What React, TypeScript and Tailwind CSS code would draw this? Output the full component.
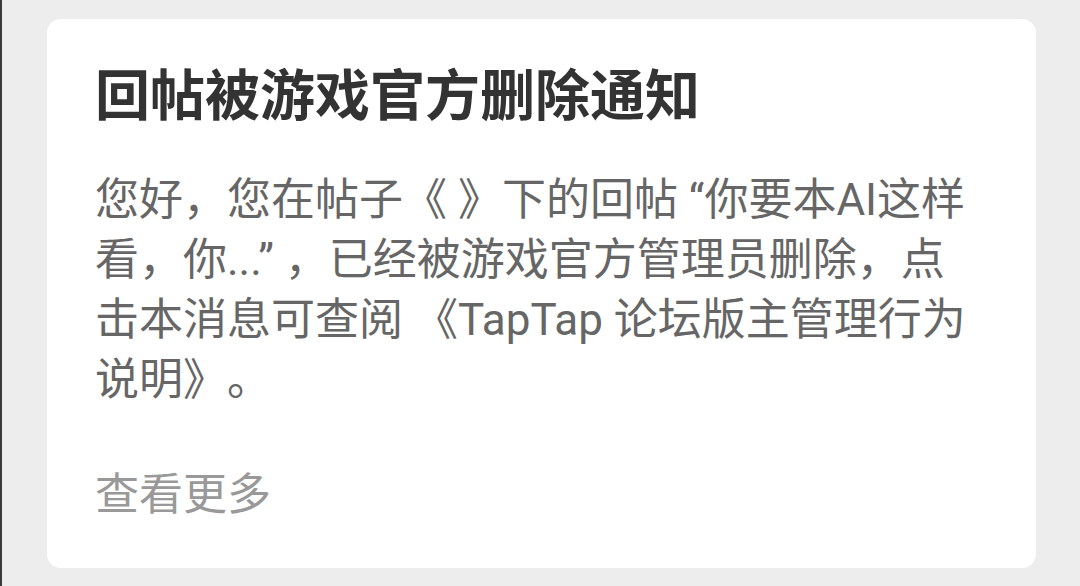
export default function App() {
  return (
    <div
      lang="zh-CN"
      className="h-[586px] w-[1080px] overflow-hidden border-l-2 border-[#3a3a3a] bg-[#ededed] pt-[19px] pl-[45px] pr-[44px] font-['Roboto','Noto_Sans_CJK_SC',sans-serif] [text-spacing-trim:space-all]"
    >
      <div className="h-[549px] rounded-[14px] bg-white pl-[48px] pr-[30px] pt-[41px]">
        {/* Title */}
        <h1 className="text-[55px] font-bold leading-[72px] text-[#333333]">
          回帖被游戏官方删除通知
        </h1>

        {/* Message body */}
        <p className="mt-[38px] whitespace-nowrap text-[44px] leading-[60px] text-[#666666]">
          您好，您在帖子《 》下的回帖 “你要本AI这样
          <br />
          看，你...” ，已经被游戏官方管理员删除，点
          <br />
          击本消息可查阅 《TapTap 论坛版主管理行为
          <br />
          说明》。
        </p>

        <div className="mt-[55px] text-[44px] leading-[60px] text-[#999999]">查看更多</div>
      </div>
    </div>
  );
}
